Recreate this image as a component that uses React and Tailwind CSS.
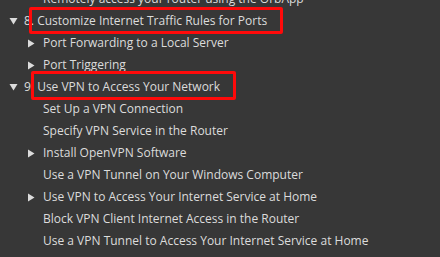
import React from "react";

const Down = () => (
  <svg width="9" height="8" viewBox="0 0 9 8" className="shrink-0">
    <path d="M0.5 1 L8.5 1 L4.5 7.5 Z" fill="#dcdcdc" />
  </svg>
);
const Right = () => (
  <svg width="8" height="9" viewBox="0 0 8 9" className="shrink-0">
    <path d="M1 0.5 L7.5 4.5 L1 8.5 Z" fill="#dcdcdc" />
  </svg>
);

function Row({ level, arrow, children, box }) {
  return (
    <div className="relative flex h-[22px] items-center">
      <div className={level === 0 ? "w-[24px] flex items-center pl-[9px]" : "w-[43px] flex items-center pl-[27px]"}>
        {arrow === "down" && <Down />}
        {arrow === "right" && <Right />}
      </div>
      <span className="whitespace-nowrap">{children}</span>
      {box}
    </div>
  );
}

export default function App() {
  return (
    <div className="w-[440px] h-[257px] overflow-hidden bg-[#373737] text-[#dcdcdc] text-[12px] leading-none" style={{ fontFamily: '"Open Sans", "DejaVu Sans", sans-serif' }}>
      <div className="-mt-[12px] flex flex-col">
        <Row level={1}>Remotely access your router using the OrbApp</Row>
        <Row
          level={0}
          arrow="down"
          box={<div className="absolute left-[29px] top-[-3px] w-[254px] h-[27px] border-[3px] border-[#ff0a0a] rounded-[2px]" />}
        >
          8. Customize Internet Traffic Rules for Ports
        </Row>
        <Row level={1} arrow="right">Port Forwarding to a Local Server</Row>
        <Row level={1} arrow="right">Port Triggering</Row>
        <Row
          level={0}
          arrow="down"
          box={<div className="absolute left-[31px] top-[-5px] w-[205px] h-[29px] border-[3px] border-[#ff0a0a] rounded-[2px]" />}
        >
          9. Use VPN to Access Your Network
        </Row>
        <Row level={1}>Set Up a VPN Connection</Row>
        <Row level={1}>Specify VPN Service in the Router</Row>
        <Row level={1} arrow="right">Install OpenVPN Software</Row>
        <Row level={1}>Use a VPN Tunnel on Your Windows Computer</Row>
        <Row level={1} arrow="right">Use VPN to Access Your Internet Service at Home</Row>
        <Row level={1}>Block VPN Client Internet Access in the Router</Row>
        <Row level={1}>Use a VPN Tunnel to Access Your Internet Service at Home</Row>
      </div>
    </div>
  );
}
